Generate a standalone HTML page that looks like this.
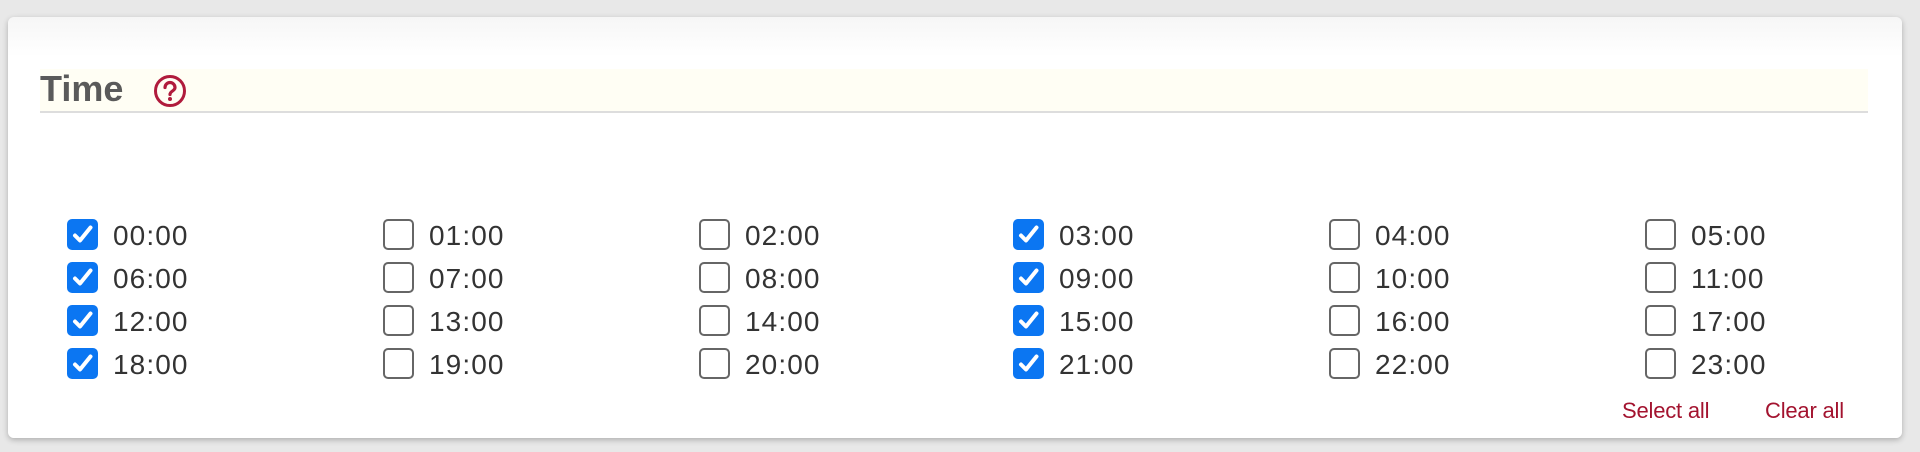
<!DOCTYPE html>
<html><head><meta charset="utf-8"><style>
html,body{margin:0;padding:0;width:1920px;height:452px;overflow:hidden;background:#e8e8e8;font-family:"Liberation Sans",sans-serif}
.card{position:absolute;left:8px;top:17px;width:1894px;height:421px;background:linear-gradient(#f6f6f6 0,#fff 40px);border-radius:6px;box-shadow:0 2px 6px rgba(0,0,0,.25)}
.band{position:absolute;left:40px;top:69px;width:1828px;height:42px;background:#fffef4;border-bottom:2px solid #ddd}
.title{position:absolute;left:40px;top:68px;font-size:36px;font-weight:bold;color:#5a5a5a}
.help{position:absolute;left:153px;top:74px}
.cb{position:absolute;width:27px;height:27px;border:2px solid #666;border-radius:5px;background:#fff;box-sizing:content-box}
.cb.on{background:#0b76f2;border-color:#0b76f2}
.cb.on svg{position:absolute;left:2px;top:2px}
.lb{position:absolute;font-size:28px;color:#333;letter-spacing:1.1px;line-height:31px}
.link{position:absolute;top:398px;font-size:22px;color:#a3132f;letter-spacing:-0.2px}
</style></head><body>
<div class="card"></div>
<div class="band"></div>
<div class="title">Time</div>
<svg class="help" width="34" height="34" viewBox="0 0 34 34"><circle cx="17" cy="17" r="14.5" fill="none" stroke="#b01b3c" stroke-width="3"/><path d="M12 13.5a5 5 0 0 1 10 0c0 3.5-5 3.5-5 7" fill="none" stroke="#b01b3c" stroke-width="3.2" stroke-linecap="round"/><circle cx="17" cy="25" r="2" fill="#b01b3c"/></svg>
<div id="g"></div>
<div class="link" style="left:1622px">Select all</div>
<div class="link" style="left:1765px">Clear all</div>
<script>
var xs=[67,383,699,1013,1329,1645],h='';
for(var r=0;r<4;r++)for(var c=0;c<6;c++){var n=r*6+c,y=219+r*43,on=(c==0||c==3);
h+='<div class="cb'+(on?' on':'')+'" style="left:'+xs[c]+'px;top:'+y+'px">'+(on?'<svg width="23" height="23" viewBox="0 0 23 23"><path d="M4 12.5l5 5L19.5 4.5" fill="none" stroke="#fff" stroke-width="4" stroke-linecap="round" stroke-linejoin="round"/></svg>':'')+'</div>';
h+='<div class="lb" style="left:'+(xs[c]+46)+'px;top:'+(y+1)+'px">'+(n<10?'0':'')+n+':00</div>';}
document.getElementById('g').innerHTML=h;
</script>
</body></html>
